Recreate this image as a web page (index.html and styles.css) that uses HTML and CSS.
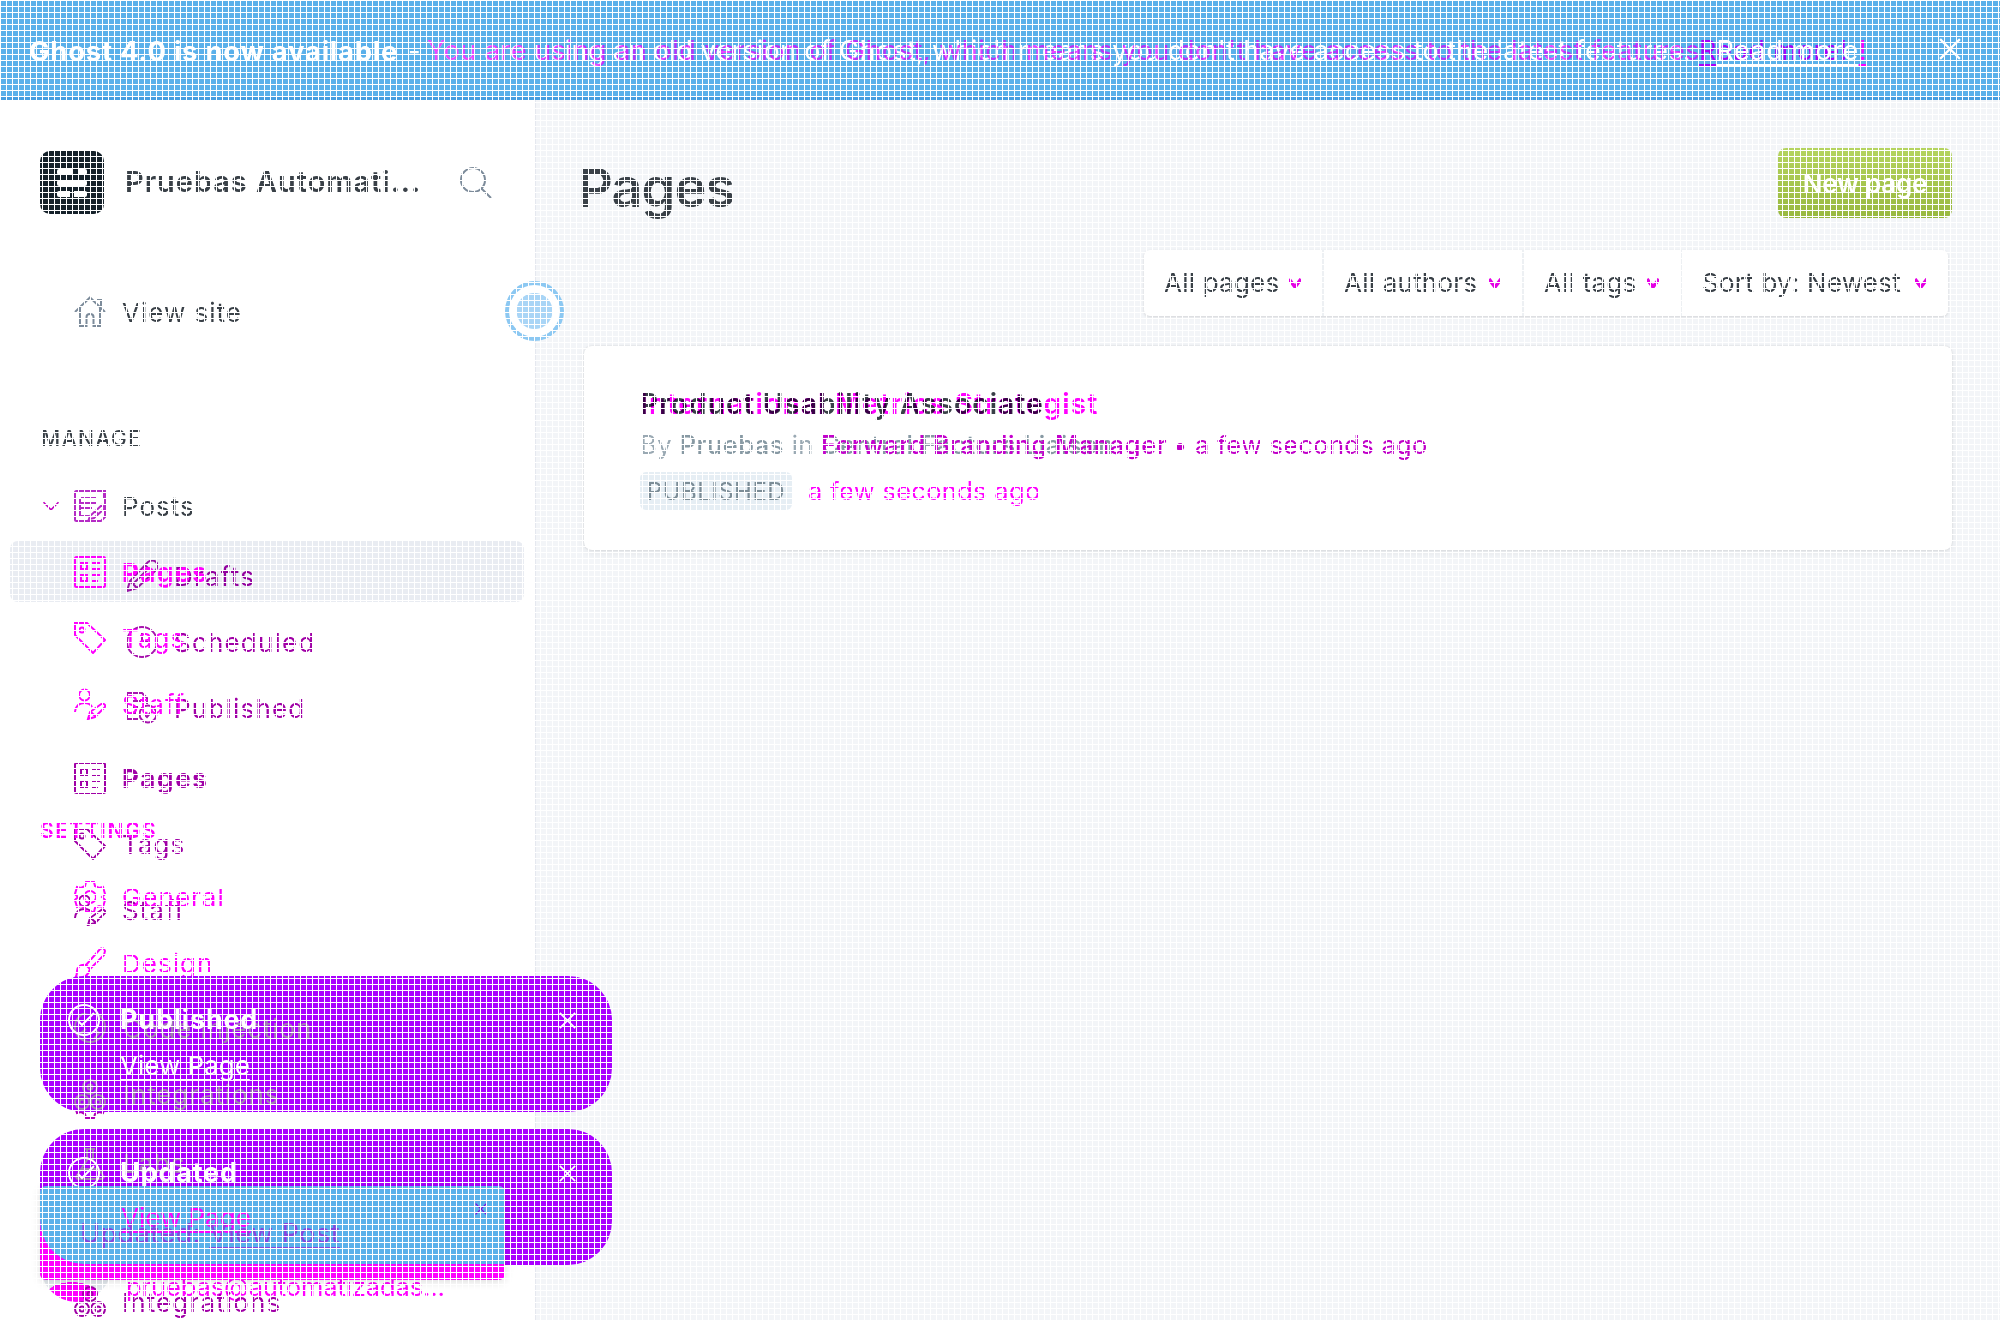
FILE: index.html
```html
<!DOCTYPE html>
<html lang="en">
<head>
<meta charset="utf-8">
<title>Pages</title>
<link rel="stylesheet" href="styles.css">
</head>
<body>
<svg class="defs" aria-hidden="true">
  <symbol id="i-search" viewBox="0 0 32 32"><circle cx="13" cy="13" r="12"/><path d="M21.5 21.5 31 31"/></symbol>
  <symbol id="i-home" viewBox="0 0 32 32"><path d="M1 16 16 1.500 31 16M6 12V30H12.500V21q0-3 3.500-3t3.500 3V30H26V12M22 4H27V10"/></symbol>
  <symbol id="i-posts" viewBox="0 0 32 32"><path d="M29 8V2.500Q29 1 27.500 1H2.500Q1 1 1 2.500V29.500Q1 31 2.500 31H27L31 27V1H27M6 8V26H15M7 8H23M7 13H23M7 18H18M16 26 28 15 31 18 20 28 15 29ZM21 21 24 24"/></symbol>
  <symbol id="i-pages" viewBox="0 0 32 32"><rect x="1" y="1" width="30" height="30" rx="1.500"/><path d="M7 7H13V13H7ZM7 19H13V25H7ZM18 7H26M18 13H26M18 19H26M18 25H24"/></symbol>
  <symbol id="i-tag" viewBox="0 0 32 32"><path d="M1 1H13L31 18 19 31 1 13Z"/><circle cx="8" cy="8" r="2.500"/></symbol>
  <symbol id="i-staff" viewBox="0 0 32 32"><circle cx="10.500" cy="7" r="5.500"/><path d="M1 24Q2 15 10.500 15 16 15 18 19M14 31 16 24 28 15.500Q32 16 31 19L21 29ZM17 24 21 28"/></symbol>
  <symbol id="i-pen" viewBox="0 0 32 32"><path d="M1 31 4 21 22 2Q27-1 30 2T30 10L11 28ZM4 21 11 28M19 5 27 13M7 24 22 9"/></symbol>
  <symbol id="i-clock" viewBox="0 0 32 32"><circle cx="16" cy="16" r="15"/><path d="M16 7V16H22"/></symbol>
  <symbol id="i-done" viewBox="0 0 32 32"><path d="M13 27H1V1H16L21 6V12M6 9H15M6 15H12M6 21H10"/><circle cx="22" cy="22" r="8.500"/><path d="M18 22 21 25 26 19"/></symbol>
  <symbol id="i-gear" viewBox="0 0 32 32"><circle cx="16" cy="16" r="6"/><path d="M12 1H20L21 5 25 7 29 6 31 13 28 16 31 19 29 26 25 25 21 27 20 31H12L11 27 7 25 3 26 1 19 4 16 1 13 3 6 7 7 11 5Z"/></symbol>
  <symbol id="i-brush" viewBox="0 0 32 32"><path d="M12 18 26 2Q30 0 31 4L30 8 16 22ZM12 18Q4 17 3 24 3 29 1 31 14 32 16 22"/></symbol>
  <symbol id="i-code" viewBox="0 0 32 32"><circle cx="16" cy="14" r="15"/><path d="M12 16 7 20 12 26M20 16 25 20 20 26"/></symbol>
  <symbol id="i-nodes" viewBox="0 0 32 32"><circle cx="16" cy="8" r="7"/><circle cx="8" cy="23" r="7"/><circle cx="24" cy="23" r="7"/><circle cx="16" cy="8" r="2.500"/><circle cx="8" cy="23" r="2.500"/><circle cx="24" cy="23" r="2.500"/></symbol>
  <symbol id="i-flask" viewBox="0 0 32 32"><path d="M11 1H21M13 1V12L2 29Q3 31 5 31H27Q29 31 30 29L19 12V1M7 21H25"/></symbol>
  <symbol id="i-check" viewBox="0 0 32 32"><circle cx="16" cy="16" r="15"/><path d="M10 17 14 21 26 9"/></symbol>
  <symbol id="i-x" viewBox="0 0 20 20"><path d="M1 1 19 19M19 1 1 19"/></symbol>
  <symbol id="i-down" viewBox="0 0 20 12"><path d="M1 1.500 10 10.500 19 1.500"/></symbol>
  <symbol id="i-vee" viewBox="0 0 12 10"><path d="M0 1 6 9 12 1"/></symbol>
</svg>

<header class="banner">
  <p class="banner-text"><b>Ghost 4.0 is now available</b><span class="dash">-</span></p>
  <p class="notice">You are using an old version of Ghost, which means you don't have access to the latest features. <u>Read more!</u></p>
  <p class="notice notice-alt">You are using an old version of Ghost, which means you don't have access to the latest features. <u>Read more</u><u class="tail">!</u></p>
  <svg class="icon banner-close"><use href="#i-x"/></svg>
</header>

<div class="app">
  <aside class="sidebar">
    <div class="brand">
      <span class="logo"><i class="bar split"></i><i class="bar"></i><i class="bar halves"></i></span>
      <strong>Pruebas Automati...</strong>
      <svg class="icon search"><use href="#i-search"/></svg>
    </div>
    <a class="row site"><svg class="icon"><use href="#i-home"/></svg><span>View site</span></a>
    <h2 class="group manage">MANAGE</h2>
    <a class="row posts"><svg class="caret"><use href="#i-down"/></svg><svg class="icon"><use href="#i-posts"/></svg><span>Posts</span></a>
    <nav class="nav old">
      <a class="row sub"><svg class="icon"><use href="#i-pen"/></svg><span>Drafts</span></a>
      <a class="row sub"><svg class="icon"><use href="#i-clock"/></svg><span>Scheduled</span></a>
      <a class="row sub"><svg class="icon"><use href="#i-done"/></svg><span>Published</span></a>
      <a class="row first"><svg class="icon"><use href="#i-pages"/></svg><b>Pages</b></a>
      <a class="row"><svg class="icon"><use href="#i-tag"/></svg><span>Tags</span></a>
      <a class="row"><svg class="icon"><use href="#i-staff"/></svg><span>Staff</span></a>
    </nav>
    <nav class="nav new">
      <a class="row active"><svg class="icon"><use href="#i-pages"/></svg><b>Pages</b></a>
      <a class="row"><svg class="icon"><use href="#i-tag"/></svg><span>Tags</span></a>
      <a class="row"><svg class="icon"><use href="#i-staff"/></svg><span>Staff</span></a>
      <h2 class="group">SETTINGS</h2>
      <a class="row"><svg class="icon"><use href="#i-gear"/></svg><span>General</span></a>
      <a class="row"><svg class="icon"><use href="#i-brush"/></svg><span>Design</span></a>
    </nav>
    <div class="hidden-gear"><svg class="icon"><use href="#i-gear"/></svg></div>
    <div class="account">
      <span class="avatar"></span>
      <span class="email">pruebas@automatizadas...</span>
    </div>
    <a class="row integrations"><svg class="icon"><use href="#i-nodes"/></svg><span>Integrations</span></a>
  </aside>

  <main class="main">
    <div class="title-bar"><h1>Pages</h1><button class="primary">New page</button></div>
    <div class="filters">
      <span class="f1">All pages<svg><use href="#i-vee"/></svg></span>
      <span class="f2">All authors<svg><use href="#i-vee"/></svg></span>
      <span class="f3">All tags<svg><use href="#i-vee"/></svg></span>
      <span class="f4">Sort by: Newest<svg><use href="#i-vee"/></svg></span>
    </div>
    <article class="card">
      <h3 class="stack"><span class="t-main">Product Usability Associate</span><span class="alt">International Metrics Strategist</span></h3>
      <p class="by"><span class="author">By <b>Pruebas</b> in</span>
        <span class="stack names"><b class="n-main">Central Factors Liaison</b><b class="n-alt">Forward Branding Manager</b></span>
        <span class="ago purple">• a few seconds ago</span></p>
      <p class="state"><span class="badge">PUBLISHED</span><span class="ago pink">a few seconds ago</span></p>
    </article>
  </main>
</div>

<div class="beacon"></div>

<div class="toasts">
  <section class="toast">
    <div class="behind b1"><svg class="icon"><use href="#i-code"/></svg>Code injection</div>
    <div class="behind b2"><svg class="icon"><use href="#i-nodes"/></svg>Integrations</div>
    <svg class="icon ok"><use href="#i-check"/></svg>
    <div class="body"><b>Published</b><u>View Page</u></div>
    <svg class="icon x"><use href="#i-x"/></svg>
  </section>
  <section class="toast">
    <div class="behind b3"><svg class="icon"><use href="#i-flask"/></svg>Labs</div>
    <svg class="icon ok"><use href="#i-check"/></svg>
    <div class="body"><b>Updated</b></div>
    <svg class="icon x"><use href="#i-x"/></svg>
  </section>
</div>

<section class="alert">
  <div class="alert-face">
    <u class="page-link">View Page</u>
    <p class="message">Updated: <u>View Post</u></p>
    <svg class="icon alert-x"><use href="#i-x"/></svg>
  </div>
</section>
<div class="mesh"></div>
</body>
</html>
```
FILE: styles.css
```css
* { box-sizing: border-box; margin: 0; padding: 0; }
body { width: 2000px; height: 1320px; overflow: hidden; position: relative; background: #fff; color: #394047; font: 400 26px/30px Inter, "Liberation Sans", sans-serif; }
.defs { position: absolute; width: 0; height: 0; }
svg { display: block; fill: none; stroke: currentColor; stroke-width: 2; flex: none; overflow: visible; }
.icon { width: 32px; height: 32px; }
.stack { display: grid; }
.stack > * { grid-area: 1 / 1; white-space: nowrap; }

.banner { position: relative; height: 100px; background: #5ab0ea; border-bottom: 3px solid #459de0; color: #fff; padding: 35px 29px; line-height: 32px; white-space: nowrap; }
.banner-text { display: flex; font-size: 27.5px; }
.banner-text b { font-weight: 700; width: 379px; letter-spacing: .72px; }
.notice { position: absolute; left: 427px; top: 35px; font-size: 27px; letter-spacing: .33px; }
.notice-alt { color: #e000ffb8; letter-spacing: .51px; }
.notice u, .toast u, .alert u { text-underline-offset: 4px; text-decoration-thickness: 2px; }
.notice u { color: #a800f8; }
.notice-alt u { color: #fff; }
.notice-alt .tail { color: #f0f; }
.banner-close { position: absolute; left: 1939px; top: 38px; width: 22px; height: 22px; }

.app { display: flex; height: 1220px; }
.sidebar { position: relative; width: 536px; border-right: 1px solid #e5e8ef; padding-top: 51px; overflow: hidden; flex: none; }
.brand { display: flex; align-items: center; padding-left: 40px; height: 63px; }
.brand strong { width: 335px; margin-left: 21px; padding-bottom: 2px; font-size: 29px; font-weight: 600; letter-spacing: .95px; white-space: nowrap; }
.search { color: #7c8b9a; }
.logo { width: 64px; height: 63px; border-radius: 10px; background: #15212a; display: flex; flex-direction: column; justify-content: center; gap: 5px; padding: 0 17px; }
.bar { height: 6px; background: #fff; border-radius: 2px; }
.split { background: linear-gradient(90deg, #fff 55%, #15212a 55% 70%, #fff 70%); }
.halves { background: linear-gradient(90deg, #fff 42%, #15212a 42% 58%, #fff 58%); }
.row { display: flex; align-items: center; height: 66px; padding-left: 74px; letter-spacing: 1px; white-space: nowrap; }
.row span, .row b { margin-left: 16px; padding-top: 1px; }
.row b { font-weight: 700; letter-spacing: 1.7px; }
.site { margin-top: 65px; }
.site .icon, .posts .icon { color: #7c8b9a; }
.group { padding-left: 41px; font-size: 21px; line-height: 24px; font-weight: 500; letter-spacing: 1.5px; }
.manage { margin-top: 82px; }
.posts { margin-top: 22px; padding-left: 42px; }
.caret { width: 18px; height: 10px; margin-right: 14px; color: #c000c0; }
.posts .icon { color: #b52bc5; }
.nav { margin-top: 4px; color: #a000a6; }
.old .sub { padding-left: 126px; }
.old .sub .icon { color: #a715ae; }
.sub .icon + span { margin-left: 16px; letter-spacing: 1.2px; }
.first { margin-top: 4px; }
.new { position: absolute; left: 0; top: 437px; width: 534px; color: #f0f; }
.new::before { content: ""; position: absolute; left: 10px; top: 0; width: 514px; height: 61px; background: #e9ecf2; border-radius: 8px; mix-blend-mode: multiply; }
.new .row { position: relative; top: -2px; }
.new .group { margin: 80px 0 23px; padding-left: 40px; font-weight: 600; }
.hidden-gear { position: absolute; left: 74px; top: 987px; color: #b000b8; }
.account { position: absolute; left: 40px; top: 1126px; display: flex; color: #f0f; }
.avatar { width: 72px; height: 76px; border-radius: 50%; background: radial-gradient(ellipse 25px 12px at 32px 68px, #f0f 97%, #e4e9ee 100%); }
.email { margin: 46px 0 0 14px; font-size: 25.500px; letter-spacing: -.1px; }
.integrations { position: absolute; left: 0; top: 1169px; color: #a000a6; letter-spacing: 1.15px; }

.main { flex: 1; background: #f3f5f8; padding: 48px 48px 0 48px; }
.title-bar { display: flex; justify-content: space-between; height: 70px; }
.title-bar h1 { margin: 7px 0 0 -6px; font-size: 54px; line-height: 66px; font-weight: 600; letter-spacing: -.9px; }
.primary { width: 174px; height: 70px; border: 0; border-radius: 8px; background: linear-gradient(#b5d45f, #98b83f); color: #fff; font: 600 26px Inter, sans-serif; letter-spacing: -.2px; }
.filters { display: flex; width: 804px; height: 66px; margin: 32px 4px 30px auto; background: #fff; border-radius: 6px; box-shadow: 0 1px 3px #0002; letter-spacing: .22px; }
.filters span { display: flex; align-items: center; justify-content: space-between; border-left: 2px solid #edf0f3; padding: 0 21px 0 20px; white-space: nowrap; }
.filters span:first-child { border-left: 0; padding-left: 20px; }
.filters svg { width: 12px; height: 10px; color: #e500e5; stroke-width: 3.500; }
.f1 { width: 178px; } .f2 { width: 200px; } .f3 { width: 158px; } .f4 { width: 268px; }
.card { height: 204px; background: #fff; border-radius: 8px; padding: 41px 56px; box-shadow: 0 0 2px #0002, 0 3px 8px #0001; }
.card h3 { font-size: 28px; font-weight: 600; line-height: 34px; }
.t-main { letter-spacing: 1.15px; color: #394047; }
.alt { color: #f0f; letter-spacing: 1.25px; mix-blend-mode: multiply; }
.by { display: flex; margin-top: 8px; color: #9aa9b3; line-height: 32px; font-size: 25.500px; white-space: nowrap; }
.author { letter-spacing: .5px; width: 171px; }
.by b { font-weight: 500; color: #8799a3; }
.names { width: 348px; margin-left: 10px; letter-spacing: .6px; }
.by .n-alt { color: #c400cd; }
.purple { color: #c000c8; margin-left: 4px; letter-spacing: .3px; }
.state { display: flex; margin-top: 11px; line-height: 38px; }
.badge { width: 152px; height: 38px; border-radius: 6px; background: #e6eef4; color: #7b8c96; font-size: 24px; line-height: 40px; text-align: center; letter-spacing: .5px; }
.pink { color: #f0f; margin-left: 16px; font-size: 25.500px; letter-spacing: .3px; }

.beacon { position: absolute; left: 505px; top: 281px; width: 59px; height: 60px; border: 4px solid #8cc8f2; border-radius: 50%; background: radial-gradient(circle, #a9d5f6 17.500px, #fff 18.500px); }

.toasts { position: absolute; left: 40px; top: 976px; display: grid; gap: 17px; }
.toast { position: relative; display: flex; width: 572px; height: 136px; border-radius: 44px; background: #aa00ff; color: #fff; padding: 28px 36px 0 28px; }
.toast .ok, .toast .body, .toast .x { position: relative; }
.toast .body { display: flex; flex-direction: column; flex: 1; margin-left: 20px; gap: 14px; line-height: 32px; }
.toast .body b { font-size: 27px; font-weight: 700; letter-spacing: .8px; }
.toast .x { width: 17px; height: 17px; margin-top: 8px; }
.behind { position: absolute; left: 34px; display: flex; gap: 17px; align-items: center; letter-spacing: .9px; color: #a080b0; }
.b1 { top: 37px; } .b2 { top: 103px; } .b3 { top: 19px; }
.alert { position: absolute; left: 40px; top: 1186px; width: 465px; height: 94px; border-radius: 6px; background: #f0f; box-shadow: 0 2px 10px #0002; }
.alert-face { position: relative; height: 78px; border-radius: 6px 6px 0 44px; background: #5ab0ea; white-space: nowrap; }
.page-link { position: absolute; left: 81px; top: 17px; color: #f0f; }
.message { position: absolute; left: 40px; top: 33px; color: #8844dd; font-size: 27px; letter-spacing: .5px; }
.alert-x { position: absolute; left: 435px; top: 17px; width: 12px; height: 12px; color: #8200e0; }
.mesh { position: absolute; inset: 0; pointer-events: none; background: repeating-linear-gradient(90deg, #fff 0 1px, transparent 1px 6px), repeating-linear-gradient(#fff 0 1px, transparent 1px 6px); }
```
